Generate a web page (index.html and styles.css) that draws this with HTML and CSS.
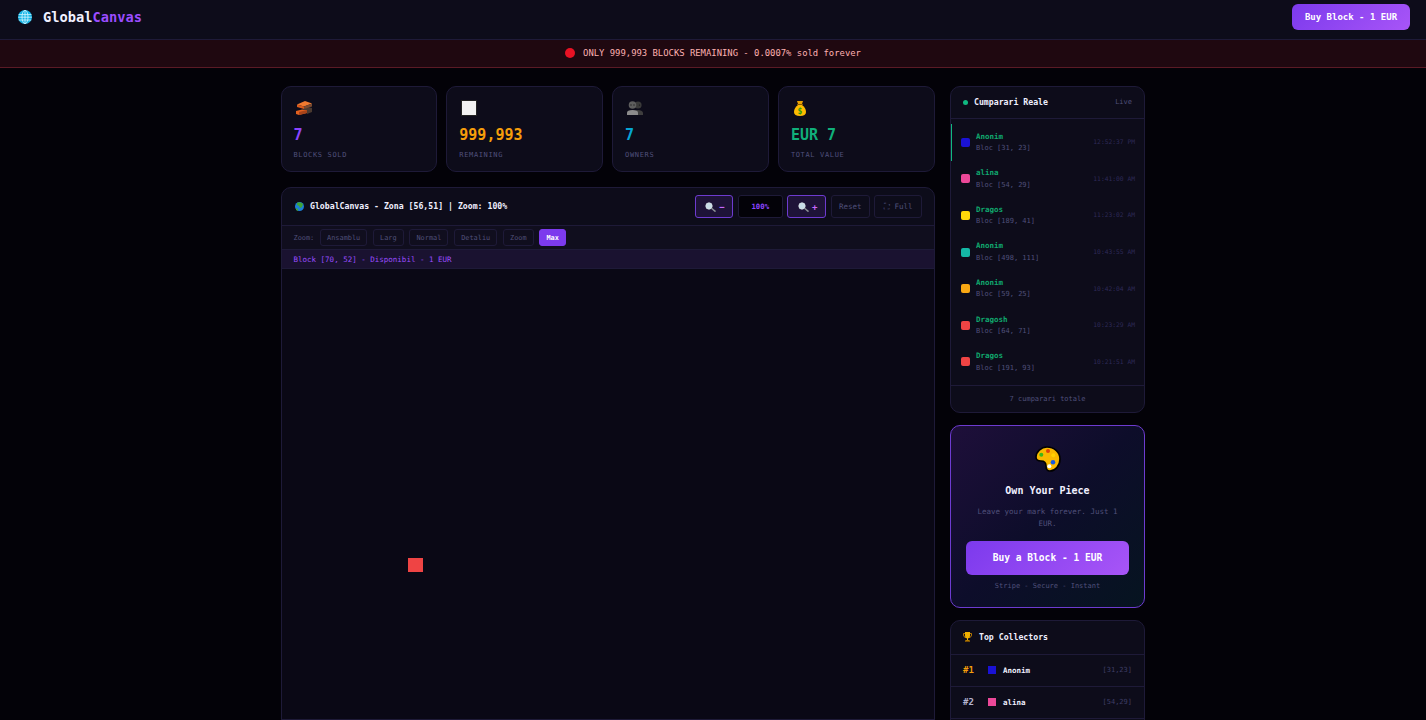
FILE: index.html
```html
<!DOCTYPE html>
<html lang="en">
<head>
<meta charset="utf-8">
<title>GlobalCanvas</title>
<link rel="stylesheet" href="styles.css">
</head>
<body>
<header class="topbar">
  <div class="logo">
    <svg class="ic-logo" viewBox="0 0 14 14"><circle cx="7" cy="7" r="7" fill="#12b4e6"/><g stroke="#d8f6ff" stroke-width=".8" fill="none"><ellipse cx="7" cy="7" rx="3" ry="6.8"/><path d="M7 .2v13.6M.6 4.6h12.8M.2 7.2h13.6M.8 10h12.4"/></g></svg>
    <span class="logo-text">Global<span class="accent">Canvas</span></span>
  </div>
  <button class="buy-top">Buy Block - 1 EUR</button>
</header>
<div class="banner"><span class="dot-red"></span><span>ONLY 999,993 BLOCKS REMAINING - 0.0007% sold forever</span></div>
<main class="layout">
  <section class="main-col">
    <div class="stats">
      <div class="stat">
        <div class="stat-icon"><svg class="ic-brick" viewBox="0 0 16 14"><path d="M0 10l8-2 3 1v3l-8 2-3-1z" fill="#e2601f"/><path d="M3 11l8-2v3l-8 2z" fill="#a8441a"/><path d="M5 9l7-3 4 1v4l-5 2v-4z" fill="#4a3a30"/><path d="M1 3.500l8-3.500 7 2.500-8 3z" fill="#f07a30"/><path d="M1 3.500l7 2v2.500l-7-2z" fill="#d85a1c"/><path d="M8 5.500l8-3v3l-8 2.500z" fill="#7a4a30"/></svg></div>
        <div class="stat-value purple">7</div><div class="stat-label">BLOCKS SOLD</div>
      </div>
      <div class="stat">
        <div class="stat-icon"><span class="ic-square"></span></div>
        <div class="stat-value orange">999,993</div><div class="stat-label">REMAINING</div>
      </div>
      <div class="stat">
        <div class="stat-icon"><svg class="ic-people" viewBox="0 0 16 14"><circle cx="11" cy="4" r="3.600" fill="#3a3a3a"/><path d="M7 14v-2.500q0-2.500 4-2.500t5 2.500v2.500z" fill="#3e3e3e"/><circle cx="5.500" cy="4" r="3.800" fill="#5e5e5e"/><path d="M0 14v-2.500q0-2.500 5.500-2.500t5.500 2.500v2.500z" fill="#8c8c8c"/><circle cx="4" cy="4" r=".7" fill="#222"/><circle cx="7" cy="4" r=".7" fill="#222"/><circle cx="12.500" cy="4" r=".6" fill="#111"/></svg></div>
        <div class="stat-value cyan">7</div><div class="stat-label">OWNERS</div>
      </div>
      <div class="stat">
        <div class="stat-icon"><svg class="ic-bag" viewBox="0 0 12 15"><path d="M3 0h6l-1 3h-4z" fill="#e8a000"/><path d="M3 3h6v1h-6z" fill="#8a5a00"/><path d="M4 4h4q4 3 4 7 0 4-6 4t-6-4q0-4 4-7z" fill="#fdbb00"/><text class="bag-sign" x="6" y="12.500" text-anchor="middle">$</text></svg></div>
        <div class="stat-value green">EUR 7</div><div class="stat-label">TOTAL VALUE</div>
      </div>
    </div>
    <div class="canvas-card">
      <div class="canvas-head">
        <div class="canvas-title">
          <svg class="ic-earth" viewBox="0 0 9 9"><circle cx="4.500" cy="4.500" r="4.500" fill="#1c7fd6"/><path d="M2 1q3-2 6 1l-1 3-2 1-1-2-2-1zM1 6l2 1v2l-2-1z" fill="#3fa535"/></svg>
          <span>GlobalCanvas - Zona [56,51] | Zoom: 100%</span>
        </div>
        <div class="controls">
          <button class="ctl ctl-on ctl-minus"><svg class="ic-mag" viewBox="0 0 11 10"><circle cx="4" cy="4" r="3.200" fill="#c8dde8" stroke="#d8dfe6" stroke-width=".8"/><path d="M6.500 6.200l4 3.400" stroke="#8d9297" stroke-width="1.500"/></svg><span>−</span></button>
          <div class="ctl-level">100%</div>
          <button class="ctl ctl-on ctl-plus"><svg class="ic-mag" viewBox="0 0 11 10"><circle cx="4" cy="4" r="3.200" fill="#c8dde8" stroke="#d8dfe6" stroke-width=".8"/><path d="M6.500 6.200l4 3.400" stroke="#8d9297" stroke-width="1.500"/></svg><span>+</span></button>
          <button class="ctl ctl-off ctl-reset">Reset</button>
          <button class="ctl ctl-off ctl-full">⛶ Full</button>
        </div>
      </div>
      <div class="zoom-row">
        <span class="zoom-label">Zoom:</span>
        <button class="chip">Ansamblu</button>
        <button class="chip">Larg</button>
        <button class="chip">Normal</button>
        <button class="chip">Detaliu</button>
        <button class="chip">Zoom</button>
        <button class="chip chip-on">Max</button>
      </div>
      <div class="info-row">Block [70, 52] - Disponibil - 1 EUR</div>
      <div class="canvas-area"><div class="pixel"></div></div>
    </div>
  </section>
  <aside class="side-col">
    <div class="card">
      <div class="card-head"><span class="live-dot"></span><span class="card-title">Cumparari Reale</span><span class="live">Live</span></div>
      <div class="purchases">
        <div class="purchase first"><span class="sw sw-blue"></span><div class="p-text"><div class="p-name">Anonim</div><div class="p-loc">Bloc [31, 23]</div></div><span class="p-time">12:52:37 PM</span></div>
        <div class="purchase"><span class="sw sw-pink"></span><div class="p-text"><div class="p-name">alina</div><div class="p-loc">Bloc [54, 29]</div></div><span class="p-time">11:41:00 AM</span></div>
        <div class="purchase"><span class="sw sw-yellow"></span><div class="p-text"><div class="p-name">Dragos</div><div class="p-loc">Bloc [189, 41]</div></div><span class="p-time">11:23:02 AM</span></div>
        <div class="purchase"><span class="sw sw-teal"></span><div class="p-text"><div class="p-name">Anonim</div><div class="p-loc">Bloc [498, 111]</div></div><span class="p-time">10:43:55 AM</span></div>
        <div class="purchase"><span class="sw sw-amber"></span><div class="p-text"><div class="p-name">Anonim</div><div class="p-loc">Bloc [59, 25]</div></div><span class="p-time">10:42:04 AM</span></div>
        <div class="purchase"><span class="sw sw-red"></span><div class="p-text"><div class="p-name">Dragosh</div><div class="p-loc">Bloc [64, 71]</div></div><span class="p-time">10:23:29 AM</span></div>
        <div class="purchase"><span class="sw sw-red"></span><div class="p-text"><div class="p-name">Dragos</div><div class="p-loc">Bloc [191, 93]</div></div><span class="p-time">10:21:51 AM</span></div>
      </div>
      <div class="card-foot">7 cumparari totale</div>
    </div>
    <div class="cta">
      <div class="cta-icon"><svg class="ic-palette" viewBox="0 0 26 26"><path d="M12 1C19 1 25 6 25 13 25 20 20 25 15 25 12 25 11 23 11 20 11 17 9 15 6 15 3 15 1 14 1 11 1 6 6 1 12 1z" fill="#f9b800" stroke="#000" stroke-width="1.600"/><circle cx="6.300" cy="8.700" r="2" fill="#3fb618"/><circle cx="13" cy="5" r="2" fill="#e0400c"/><circle cx="18.300" cy="9.300" r="2" fill="#ffd000"/><circle cx="18" cy="16.300" r="2.300" fill="#1458e0"/><circle cx="14.300" cy="20.300" r="2" fill="#fff"/></svg></div>
      <div class="cta-title">Own Your Piece</div>
      <p class="cta-desc">Leave your mark forever. Just 1 EUR.</p>
      <button class="cta-btn">Buy a Block - 1 EUR</button>
      <div class="cta-note">Stripe - Secure - Instant</div>
    </div>
    <div class="card collect-card">
      <div class="collect-head"><svg class="ic-trophy" viewBox="0 0 9 10"><path d="M.5 1.500h8v1.500q0 2-2 2.500h-4q-2-.5-2-2.500z" fill="none" stroke="#b87a00"/><path d="M2 0h5v4q0 2-2 2.500v1.500h1.500v2h-4v-2h1.500v-1.500q-2-.5-2-2.500z" fill="#f0b000"/><path d="M2.500 8.500h4v1.500h-4z" fill="#7a4a00"/></svg><span class="card-title">Top Collectors</span></div>
      <div class="collector"><span class="rank rank-1">#1</span><span class="sq sw-blue"></span><span class="c-name">Anonim</span><span class="c-pos">[31,23]</span></div>
      <div class="collector"><span class="rank">#2</span><span class="sq sw-pink"></span><span class="c-name">alina</span><span class="c-pos">[54,29]</span></div>
    </div>
  </aside>
</main>
</body>
</html>
```
FILE: styles.css
```css
* { box-sizing: border-box; }
html, body { margin: 0; padding: 0; background: #030208; }
body { font-family: "DejaVu Sans Mono", "Liberation Mono", monospace; color: #e8e8f0; }
button { font-family: inherit; cursor: pointer; }
svg { display: block; flex: none; }

.topbar { height: 40px; background: #0d0c1a; border-bottom: 1px solid #1e1a38; display: flex; align-items: center; justify-content: space-between; padding: 0 16px 5px 18px; }
.logo { display: flex; align-items: center; gap: 11px; }
.ic-logo { width: 14px; height: 14px; }
.logo-text { font-size: 13.7px; font-weight: 700; color: #f0f0ff; }
.accent { color: #9b4dff; }
.buy-top { width: 118px; height: 26px; border: 0; border-radius: 6px; background: linear-gradient(135deg, #7c3aed, #a855f7); color: #fff; font-size: 9px; font-weight: 700; padding: 0; }

.banner { height: 28px; padding-bottom: 1px; background: #1f0810; border-bottom: 1px solid #5a1a25; display: flex; align-items: center; justify-content: center; gap: 8px; font-size: 8.900px; color: #fdb0b0; }
.dot-red { width: 10px; height: 10px; border-radius: 50%; background: #e81224; }

.layout { display: flex; gap: 15px; width: 864px; margin-left: 281px; padding-top: 18px; }
.main-col { width: 654px; display: flex; flex-direction: column; gap: 15px; }
.side-col { width: 195px; display: flex; flex-direction: column; gap: 12px; }

.stats { display: grid; grid-template-columns: repeat(4, 1fr); gap: 9.100px; width: 654.100px; margin-left: -0.500px; }
.stat { height: 86px; background: #0d0c1a; border: 1px solid #1e1a38; border-radius: 10px; padding: 12px; }
.stat-icon { height: 18px; display: flex; align-items: center; padding-left: 2px; }
.ic-brick { width: 16px; height: 14px; }
.ic-square { display: block; width: 16px; height: 16px; background: #f2f2f2; border: 1px solid #222; }
.ic-people { width: 16px; height: 14px; }
.ic-bag { width: 12px; height: 15px; margin-left: 1px; }
.bag-sign { font-size: 8px; font-weight: 700; fill: #2f9a10; }
.stat-value { font-size: 15px; font-weight: 700; line-height: 20px; margin-top: 8px; }
.stat-label { font-size: 7px; letter-spacing: 0.65px; line-height: 10px; margin-top: 5px; color: #50507a; }
.purple { color: #8b45ff; }
.orange { color: #f59e0b; }
.cyan { color: #06a5d4; }
.green { color: #10b07a; }

.canvas-card { height: 560px; display: flex; flex-direction: column; background: #0d0c1a; border: 1px solid #1e1a38; border-radius: 10px; overflow: hidden; }
.canvas-head { height: 38px; flex: none; display: flex; align-items: center; justify-content: space-between; padding: 0 12px 0 13px; border-bottom: 1px solid #1e1a38; }
.canvas-title { display: flex; align-items: center; gap: 6px; padding-bottom: 1px; font-size: 8.200px; font-weight: 700; color: #f0f0ff; }
.ic-earth { width: 9px; height: 9px; }
.controls { display: flex; gap: 4.700px; }
.ctl { height: 23px; border-radius: 3px; font-size: 7.500px; padding: 0; display: flex; align-items: center; justify-content: center; }
.ctl-on { background: #1e1338; border: 1px solid #6d3bd0; color: #c868ff; gap: 3px; padding-left: 2px; font-weight: 700; font-size: 9px; }
.ic-mag { width: 11px; height: 10px; }
.ctl-minus { width: 38px; }
.ctl-plus { width: 38.600px; }
.ctl-off { background: transparent; border: 1px solid #1e1a38; color: #50507a; }
.ctl-reset { width: 39px; }
.ctl-full { width: 47.600px; }
.ctl-level { width: 45px; height: 23px; display: flex; align-items: center; justify-content: center; background: #030208; border: 1px solid #1e1a38; border-radius: 3px; font-size: 7.300px; font-weight: 700; color: #8b45ff; }

.zoom-row { height: 24px; flex: none; display: flex; align-items: center; gap: 5.800px; padding: 0 11.500px; background: #100e1e; border-bottom: 1px solid #1e1a38; }
.zoom-label { font-size: 6.900px; color: #50507a; }
.chip { height: 17px; padding: 0 6px; border: 1px solid #1e1a38; border-radius: 3px; background: transparent; color: #50507a; font-size: 6.900px; }
.chip-on { background: #7c3aed; border-color: #7c3aed; color: #fff; font-weight: 700; }

.info-row { height: 19px; flex: none; display: flex; align-items: center; padding: 0 11.500px; background: #1a1230; border-bottom: 1px solid #1e1a38; font-size: 7.500px; color: #9b4dff; }
.canvas-area { position: relative; height: 451px; flex: none; background: #0a0815; border-bottom: 1px solid #1e1a38; }
.pixel { position: absolute; left: 126px; top: 288.500px; width: 15px; height: 14px; background: #ef4444; }

.card { background: #0d0c1a; border: 1px solid #1e1a38; border-radius: 10px; overflow: hidden; }
.card-head { height: 32px; padding-bottom: 1px; display: flex; align-items: center; padding-left: 12px; padding-right: 12px; border-bottom: 1px solid #1e1a38; }
.live-dot { width: 5px; height: 5px; border-radius: 50%; background: #10b981; margin-right: 6px; }
.card-title { font-size: 8.200px; font-weight: 700; color: #f0f0ff; flex: 1; }
.live { font-size: 7px; color: #50507a; }
.purchases { padding: 5px 0 4.800px; }
.purchase { height: 36.600px; display: flex; align-items: center; padding: 0 9px 0 10px; position: relative; }
.purchase.first::before { content: ""; position: absolute; left: 0; top: 0; bottom: 0; width: 1px; background: #10b981; }
.sw { width: 9px; height: 9px; border-radius: 2px; margin-right: 6px; flex: none; }
.sw-blue { background: #1a12d4; }
.sw-pink { background: #ec4899; }
.sw-yellow { background: #ffd60a; }
.sw-teal { background: #14b8a6; }
.sw-amber { background: #f9a813; }
.sw-red { background: #ef4444; }
.p-text { flex: 1; }
.p-name { font-size: 7.500px; font-weight: 700; line-height: 11px; color: #10a86e; }
.p-loc { font-size: 7px; line-height: 12px; margin-top: 0.500px; color: #50507a; }
.p-time { font-size: 6.300px; color: #2e2a58; padding-bottom: 1px; }
.card-foot { height: 27px; display: flex; align-items: center; justify-content: center; border-top: 1px solid #1e1a38; font-size: 7px; color: #50507a; }

.cta { height: 183px; border: 1px solid #6d3bd0; border-radius: 10px; background: linear-gradient(135deg, #1e0f3a, #0d0d2a 50%, #061420); padding: 20px 15px 0; text-align: center; }
.cta-icon { height: 26px; display: flex; justify-content: center; }
.ic-palette { width: 26px; height: 26px; }
.cta-title { font-size: 10px; font-weight: 700; color: #f0f0ff; margin-top: 12px; line-height: 14px; }
.cta-desc { font-size: 7.500px; line-height: 12px; color: #50507a; margin: 8px 1px 11px; }
.cta-btn { width: 163px; height: 34px; border: 0; border-radius: 6px; background: linear-gradient(135deg, #7c3aed, #a855f7); color: #fff; font-size: 9.600px; font-weight: 700; padding: 0; }
.cta-note { font-size: 7px; color: #50507a; margin-top: 7px; }

.collect-card { height: 130px; flex: none; }
.collect-head { height: 34px; display: flex; align-items: center; gap: 7px; padding: 0 12px; border-bottom: 1px solid #1e1a38; }
.ic-trophy { width: 9px; height: 10px; }
.collector { height: 32px; display: flex; align-items: center; padding: 0 12px; border-bottom: 1px solid #1e1a38; }
.rank { width: 25px; font-size: 9px; font-weight: 700; color: #b4b4d0; }
.rank-1 { color: #f59e0b; }
.sq { width: 8px; height: 8px; margin-right: 7px; }
.c-name { flex: 1; font-size: 7.500px; font-weight: 700; color: #f0f0ff; }
.c-pos { font-size: 7px; color: #3e3e66; }
```
